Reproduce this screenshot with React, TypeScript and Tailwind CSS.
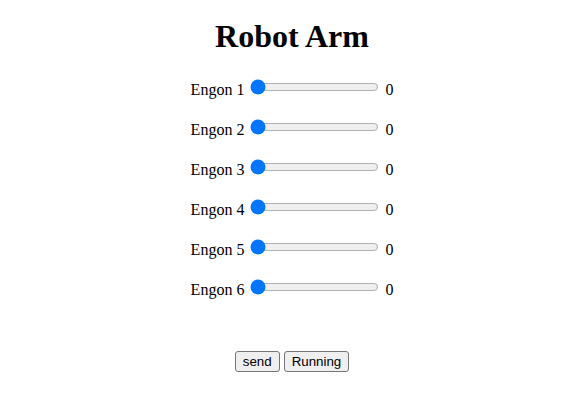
import React, { useState } from 'react';

const ENGONS = [1, 2, 3, 4, 5, 6];

export default function App() {
  const [values, setValues] = useState<number[]>(ENGONS.map(() => 0));

  return (
    <div className="text-center text-black bg-white font-['Liberation_Serif',_'Times_New_Roman',_serif] text-[16px]">
      <h1 className="text-[32px] font-bold mt-[18px] mb-[22px] leading-[37px]">Robot Arm</h1>

      {ENGONS.map((n, i) => (
        <p key={n} className="my-[15px]">
          Engon {n}{' '}
          <input
            type="range"
            min={0}
            max={180}
            value={values[i]}
            onChange={(e) => {
              const next = [...values];
              next[i] = Number(e.target.value);
              setValues(next);
            }}
            className="w-[129px] m-[2px] align-baseline"
          />{' '}
          {values[i]}
        </p>
      ))}

      <div className="mt-[49px] flex justify-center gap-[4px] font-['Liberation_Sans',_Arial,_sans-serif] text-[13.33px]">
        <button className="bg-[#efefef] border border-[#767676] rounded-[3px] px-[7px] py-[1px] leading-[17px]">send</button>
        <button className="bg-[#efefef] border border-[#767676] rounded-[3px] px-[7px] py-[1px] leading-[17px]">Running</button>
      </div>
    </div>
  );
}
